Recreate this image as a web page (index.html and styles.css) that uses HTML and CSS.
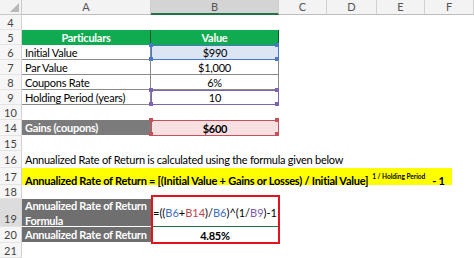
FILE: index.html
```html
<!DOCTYPE html>
<html lang="en">
<head>
    <meta charset="UTF-8">
    <title>Annualized Rate of Return</title>
    <link rel="stylesheet" href="styles.css">
</head>
<body>
<div class="sheet">

    <div class="row head">
        <div class="corner"></div>
        <div class="col">A</div>
        <div class="col on">B</div>
        <div class="col">C</div>
        <div class="col">D</div>
        <div class="col">E</div>
        <div class="col">F</div>
    </div>

    <div class="row"><div class="num">4</div></div>

    <div class="row">
        <div class="num">5</div>
        <div class="cell green">Particulars</div>
        <div class="cell green mid">Value</div>
    </div>
    <div class="row">
        <div class="num">6</div>
        <div class="cell t">Initial Value</div>
        <div class="cell t mid ref blue">$990</div>
    </div>
    <div class="row">
        <div class="num">7</div>
        <div class="cell t">Par Value</div>
        <div class="cell t mid">$1,000</div>
    </div>
    <div class="row">
        <div class="num">8</div>
        <div class="cell t">Coupons Rate</div>
        <div class="cell t mid">6%</div>
    </div>
    <div class="row">
        <div class="num">9</div>
        <div class="cell t">Holding Period (years)</div>
        <div class="cell t mid ref purple">10</div>
    </div>

    <div class="row"><div class="num">10</div></div>

    <div class="row tall">
        <div class="num">14</div>
        <div class="cell grey">Gains (coupons)</div>
        <div class="cell mid ref red"><b>$600</b></div>
    </div>

    <div class="row"><div class="num">15</div></div>

    <div class="row tall2">
        <div class="num">16</div>
        <div class="cell span">Annualized Rate of Return is calculated using the formula given below</div>
    </div>

    <div class="row tall2">
        <div class="num">17</div>
        <div class="cell span"><div class="yellow">Annualized Rate of Return = [(Initial Value + Gains or Losses) / Initial Value]<sup>1 / Holding Period</sup>- 1</div></div>
    </div>

    <div class="row short"><div class="num">18</div></div>

    <div class="row double">
        <div class="num low sel">19</div>
        <div class="cell grey dark two">Annualized Rate of Return<br>Formula</div>
        <div class="cell formula">=((<span class="fb">B6</span>+<span class="fr">B14</span>)/<span class="fb">B6</span>)^(1/<span class="fp">B9</span>)-1<span class="caret"></span></div>
    </div>
    <div class="row tall">
        <div class="num">20</div>
        <div class="cell grey dark">Annualized Rate of Return</div>
        <div class="cell mid"><b>4.85%</b></div>
    </div>

    <div class="row"><div class="num">21</div></div>

    <!-- red outline drawn over B19:B20 -->
    <div class="mark"></div>
</div>
</body>
</html>
```

FILE: styles.css
```css
* {
    box-sizing: border-box;
}

body {
    margin: 0;
    font-family: Lato, "Liberation Sans", sans-serif;
    font-size: 11px;
    letter-spacing: -0.25px;
    color: #000;
    background: #fff;
}

.sheet {
    position: relative;
    width: 474px;
    height: 258px;
    overflow: hidden;
}

.row {
    display: grid;
    grid-template-columns: 22px 129px 128px 48px 50px 48px 49px;
    grid-template-rows: 100%;
    height: 15px;
}

.row.tall { height: 16px; }
.row.tall2 { height: 17px; }
.row.short { height: 14px; }
.row.double { height: 28px; }

/* column headers */
.head .corner {
    position: relative;
    background: #f3f3f3;
    border-right: 1px solid #c9c9c9;
    border-bottom: 1px solid #c9c9c9;
}

.head .corner::after {
    content: "";
    position: absolute;
    right: 2px;
    bottom: 2px;
    border-left: 9px solid transparent;
    border-bottom: 9px solid #b8b8b8;
}

.col {
    background: #f3f3f3;
    border-right: 1px solid #cfcfcf;
    border-bottom: 1px solid #bdbdbd;
    color: #555;
    text-align: center;
    line-height: 14px;
    letter-spacing: 0;
}

.col.on {
    background: #d4d4d4;
    border-bottom: 2px solid #217346;
}

/* row numbers */
.num {
    background: #f6f6f6;
    border-right: 1px solid #d2d2d2;
    border-bottom: 1px solid #e4e4e4;
    color: #444;
    display: flex;
    align-items: center;
    justify-content: center;
    letter-spacing: 0;
}

.num.low {
    align-items: flex-end;
    padding-bottom: 1px;
}

.num.sel {
    background: #dcdcdc;
}

/* cells */
.cell {
    position: relative;
    display: flex;
    align-items: center;
    padding: 0 3px;
    white-space: nowrap;
}

.cell.mid {
    justify-content: center;
}

.cell.span {
    grid-column: 2 / 8;
}

.green {
    background: #10ab50;
    color: #fff;
    font-weight: bold;
    justify-content: center;
    border-right: 1px solid #0c5a2c;
}

.t {
    border-bottom: 1px solid #8a8a8a;
    border-right: 1px solid #8a8a8a;
}

.grey {
    background: #7b7b7b;
    color: #fff;
    font-weight: bold;
    border-bottom: 1px solid #fff;
}

.grey.dark {
    background: #6f6f6f;
    line-height: 14px;
}

.grey.two {
    line-height: 15px;
    padding-top: 1px;
}

/* cells referenced by the formula */
.ref {
    --c: #4a78c8;
    border: 1px solid var(--c);
}

.ref::after {
    content: "";
    position: absolute;
    left: -3px;
    top: -3px;
    width: 4px;
    height: 4px;
    background: var(--c);
    box-shadow: 126px 0 0 var(--c), 0 14px 0 var(--c), 126px 14px 0 var(--c);
}

.ref.blue {
    background: #dbe5f4;
}

.ref.purple {
    --c: #8063b0;
}

.ref.red {
    --c: #c8505a;
    background: #f8e0e2;
}

.yellow {
    width: 430px;
    margin-left: -3px;
    padding-left: 3px;
    height: 17px;
    line-height: 17px;
    background: #ffff00;
    font-weight: bold;
}

.yellow sup {
    font-size: 6.5px;
    letter-spacing: 0;
    vertical-align: 6px;
    margin: 0 7px 0 4px;
}

.formula {
    padding-left: 2px;
    letter-spacing: 0;
    border-bottom: 1px solid #217346;
}

.fb { color: #3f6fc6; }
.fr { color: #c0464c; }
.fp { color: #7e5ab0; }

.caret {
    display: inline-block;
    width: 1px;
    height: 12px;
    margin-left: 2px;
    background: #000;
}

.mark {
    position: absolute;
    left: 151px;
    top: 195px;
    width: 129px;
    height: 49px;
    border: 2px solid #e3121d;
}
```
